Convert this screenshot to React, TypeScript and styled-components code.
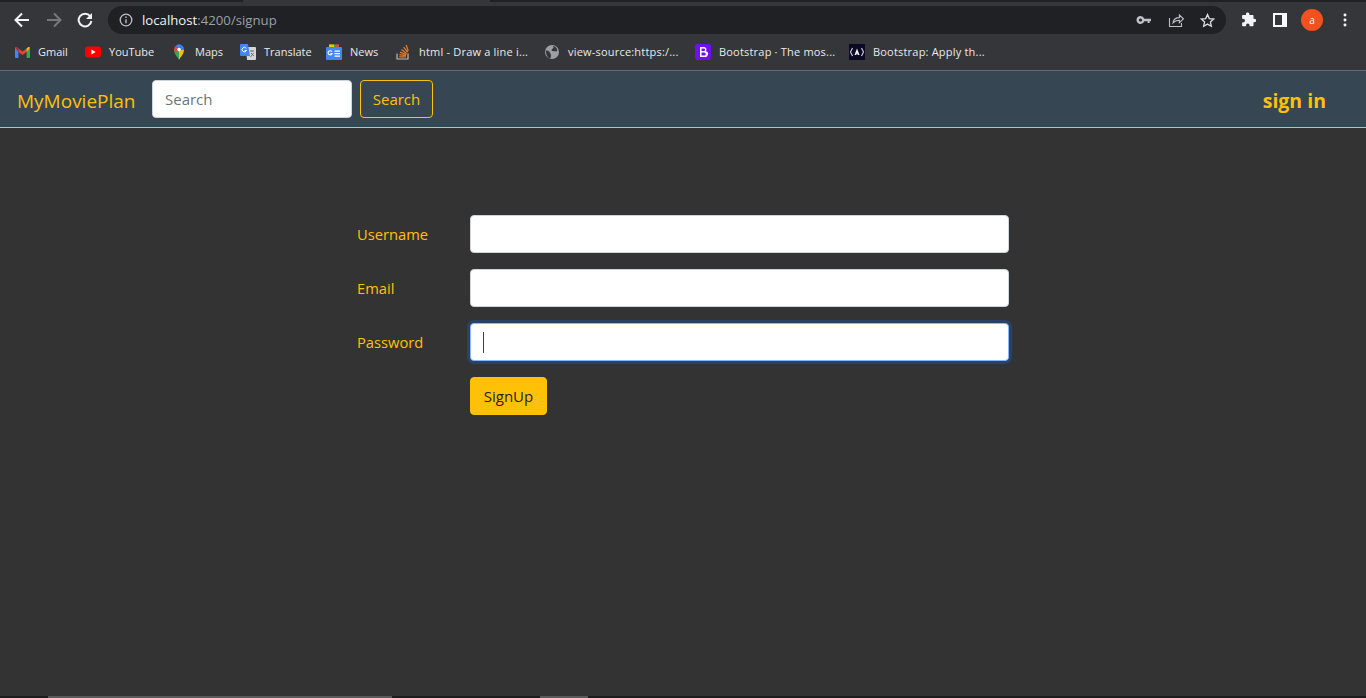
import React from 'react';
import styled, { createGlobalStyle } from 'styled-components';

const YELLOW = '#ffc107';

const GlobalStyle = createGlobalStyle`
  html, body {
    margin: 0;
    padding: 0;
    height: 100%;
    overflow: hidden;
    background: #333333;
    font-family: "Open Sans", "Liberation Sans", sans-serif;
  }
  * { box-sizing: border-box; }
`;

const Page = styled.div`
  display: flex;
  flex-direction: column;
  height: 698px;
  background: #333333;
`;

const TabStrip = styled.div`
  height: 2px;
  background: #202124;
  padding-left: 243px;
`;

const ActiveTab = styled.div`
  width: 247px;
  height: 2px;
  background: #35363a;
`;

const Toolbar = styled.div`
  display: flex;
  align-items: center;
  height: 32px;
  background: #35363a;
  padding: 4px 0 0 13px;
`;

const NavIcons = styled.div`
  display: flex;
  align-items: center;
  gap: 14px;
  width: 95px;
`;

const AddressBar = styled.div`
  display: flex;
  align-items: center;
  width: 1118px;
  height: 28px;
  border-radius: 14px;
  background: #202124;
  padding: 0 11px 0 11px;
`;

const Url = styled.div`
  flex: 1;
  margin-left: 9px;
  font-size: 13.2px;
  color: #9aa0a6;
  white-space: nowrap;
`;

const UrlHost = styled.span`
  color: #f1f3f4;
`;

const AddressActions = styled.div`
  display: flex;
  align-items: center;
  gap: 16px;
`;

const ToolbarActions = styled.div`
  display: flex;
  align-items: center;
  margin-left: 14px;
  gap: 17px;
`;

const Avatar = styled.div`
  display: flex;
  align-items: center;
  justify-content: center;
  width: 22px;
  height: 22px;
  margin: 0 3px 0 -3px;
  border-radius: 50%;
  background: #f4511e;
  color: #ffffff;
  font-size: 10px;
`;

const Bookmarks = styled.div`
  display: flex;
  align-items: center;
  gap: 16px;
  height: 37px;
  background: #35363a;
  padding: 0 0 1px 14px;
  border-bottom: 1px solid #6a6d70;
`;

const Bookmark = styled.div`
  display: flex;
  align-items: center;
  gap: 8px;
`;

const BookmarkIcon = styled.span`
  display: flex;
  align-items: center;
  justify-content: center;
  width: 16px;
  height: 16px;
`;

const BookmarkLabel = styled.span<{ $width: number; $long?: boolean }>`
  width: ${p => p.$width}px;
  font-size: 11px;
  letter-spacing: ${p => (p.$long ? '0.2px' : '0')};
  line-height: 16px;
  color: #e8eaed;
  white-space: nowrap;
`;

const Navbar = styled.nav`
  display: flex;
  align-items: center;
  height: 57px;
  background: #374653;
  padding: 0 40px 0 17px;
  border-bottom: 1px solid ${YELLOW};
`;

const Brand = styled.a`
  width: 135px;
  padding-top: 3px;
  font-size: 19px;
  color: ${YELLOW};
  white-space: nowrap;
`;

const SearchInput = styled.input`
  width: 200px;
  height: 38px;
  margin-right: 8px;
  padding: 6px 12px;
  border: 1px solid #ced4da;
  border-radius: 4px;
  background: #ffffff;
  font-family: inherit;
  font-size: 15px;
  &::placeholder { color: #6c757d; opacity: 1; }
`;

const OutlineButton = styled.button`
  width: 73px;
  height: 38px;
  padding: 0;
  border: 1px solid ${YELLOW};
  border-radius: 4px;
  background: transparent;
  color: ${YELLOW};
  font-family: inherit;
  font-size: 15px;
`;

const SignIn = styled.a`
  margin-left: auto;
  padding-top: 3px;
  font-size: 19.5px;
  font-weight: 700;
  color: ${YELLOW};
`;

const Main = styled.main`
  flex: 1;
  padding: 87px 0 0 357px;
`;

const Form = styled.form`
  display: flex;
  flex-direction: column;
  gap: 16px;
  width: 652px;
`;

const Row = styled.div`
  display: flex;
  align-items: center;
`;

const Label = styled.label`
  width: 113px;
  font-size: 14.7px;
  color: ${YELLOW};
`;

const Field = styled.div<{ $focused?: boolean }>`
  display: flex;
  align-items: center;
  width: 539px;
  height: 38px;
  padding: 0 12px;
  border: 1px solid ${p => (p.$focused ? '#86b7fe' : '#ced4da')};
  border-radius: 4px;
  background: #ffffff;
  box-shadow: ${p => (p.$focused ? '0 0 0 3px rgba(13, 110, 253, 0.25)' : 'none')};
`;

const Caret = styled.span`
  width: 1px;
  height: 21px;
  background: #3a3f44;
`;

const SubmitButton = styled.button`
  width: 77px;
  height: 38px;
  margin-left: 113px;
  padding: 0;
  border: 1px solid ${YELLOW};
  border-radius: 4px;
  background: ${YELLOW};
  color: #212529;
  font-family: inherit;
  font-size: 15px;
`;

const BottomBar = styled.div`
  display: flex;
  height: 2px;
  background: #1d1d1d;
  padding-left: 48px;
  gap: 148px;
`;

const BottomThumb = styled.div<{ $width: number }>`
  width: ${p => p.$width}px;
  background: #5a5a5a;
`;

const Stroke = { fill: 'none', strokeWidth: 2 };

const BackIcon = ({ color }: { color: string }) => (
  <svg width="18" height="18" viewBox="0 0 18 18" stroke={color} {...Stroke}>
    <path d="M16 9H3M9 2.5 2.5 9 9 15.5" />
  </svg>
);

const ForwardIcon = ({ color }: { color: string }) => (
  <svg width="18" height="18" viewBox="0 0 18 18" stroke={color} {...Stroke}>
    <path d="M2 9h13M9 2.5 15.5 9 9 15.5" />
  </svg>
);

const ReloadIcon = () => (
  <svg width="16" height="16" viewBox="0 0 16 16">
    <path d="M13.2 4.2A6.4 6.4 0 1 0 14.4 9" fill="none" stroke="#f1f3f4" strokeWidth="2" />
    <path d="M15 1v6H9z" fill="#f1f3f4" />
  </svg>
);

const InfoIcon = () => (
  <svg width="14" height="14" viewBox="0 0 14 14">
    <circle cx="7" cy="7" r="5.8" fill="none" stroke="#bdc1c6" strokeWidth="1.3" />
    <path d="M6.3 6.2h1.4v4H6.3zM6.3 3.6h1.4V5H6.3z" fill="#bdc1c6" />
  </svg>
);

const KeyIcon = () => (
  <svg width="16" height="16" viewBox="0 0 16 16">
    <path
      d="M4.5 4a4 4 0 0 1 3.8 2.7H15v2.6h-1.4V11h-2V9.3H8.3A4 4 0 1 1 4.5 4zm0 2.4a1.6 1.6 0 1 0 0 3.2 1.6 1.6 0 0 0 0-3.2z"
      fill="#bdc1c6"
      fillRule="evenodd"
    />
  </svg>
);

const ShareIcon = () => (
  <svg width="16" height="16" viewBox="0 0 16 16" fill="none" stroke="#bdc1c6" strokeWidth="1.1">
    <path d="M1.5 6v8.5h12V11" />
    <path d="M5 11c.4-3.6 3-5.4 6.4-5.4V3l4 3.8-4 3.8V8.2C8.8 8.2 6.6 9 5 11z" />
  </svg>
);

const StarIcon = () => (
  <svg width="15" height="15" viewBox="0 0 16 16" fill="none" stroke="#dadce0" strokeWidth="1.4">
    <path d="M8 1.6l1.9 4.3 4.7.5-3.5 3.1 1 4.6L8 11.8l-4.1 2.3 1-4.6L1.4 6.4l4.7-.5z" />
  </svg>
);

const PuzzleIcon = () => (
  <svg width="16" height="16" viewBox="0 0 16 16">
    <path
      d="M6 1.5a1.8 1.8 0 0 1 3.4.7V3h3.4c.4 0 .7.3.7.7v3h.8a1.8 1.8 0 0 1 0 3.6h-.8v3.2c0 .4-.3.7-.7.7H9.6v-.9a1.8 1.8 0 0 0-3.6 0v.9H2.8a.7.7 0 0 1-.7-.7v-3h1a1.9 1.9 0 0 0 0-3.8h-1V3.7c0-.4.3-.7.7-.7H6z"
      fill="#f1f3f4"
    />
  </svg>
);

const SidePanelIcon = () => (
  <svg width="14" height="14" viewBox="0 0 14 14">
    <path d="M0 0h14v14H0z" fill="#f8f9fa" />
    <path d="M2 2h7v10H2z" fill="#35363a" />
  </svg>
);

const MoreIcon = () => (
  <svg width="4" height="14" viewBox="0 0 4 14" fill="#f1f3f4">
    <rect x="0.5" y="0.5" width="3" height="3" rx="1.4" />
    <rect x="0.5" y="5.5" width="3" height="3" rx="1.4" />
    <rect x="0.5" y="10.5" width="3" height="3" rx="1.4" />
  </svg>
);

const GmailIcon = () => (
  <svg width="15" height="16" viewBox="0 0 15 16">
    <path d="M0 3.5 1.5 3 3.4 4.4V14H1a1 1 0 0 1-1-1z" fill="#4285f4" />
    <path d="M15 3.5 13.5 3l-1.9 1.4V14H14a1 1 0 0 0 1-1z" fill="#34a853" />
    <path d="M3.4 4.4 7.5 7.6l4.1-3.2V8L7.5 11 3.4 8z" fill="#ea4335" />
    <path d="M0 3.5 3.4 8V4.4L1.5 3z" fill="#c5221f" />
    <path d="M15 3.5 11.6 8V4.4L13.5 3z" fill="#fbbc04" />
  </svg>
);

const YouTubeIcon = () => (
  <svg width="16" height="16" viewBox="0 0 16 16">
    <rect x="0" y="2.5" width="16" height="11" rx="3" fill="#ff0000" />
    <path d="M6.4 5.5v5L10.6 8z" fill="#ffffff" />
  </svg>
);

const MapsIcon = () => (
  <svg width="14" height="16" viewBox="0 0 14 16">
    <path d="M7 16C5.8 13 2 10.4 2 5.5L7 6z" fill="#34a853" />
    <path d="M7 16c1.2-3 5-5.6 5-10.5L7 6z" fill="#fbbc04" />
    <path d="M2 5.5A5 5 0 0 1 3.6 2L7 5.500 3.500 9z" fill="#ea4335" />
    <path d="M3.6 2A5 5 0 0 1 9.6 1L7 5z" fill="#4285f4" />
    <path d="M9.6 1A5 5 0 0 1 12 5.5L7 6z" fill="#4285f4" />
    <circle cx="7" cy="5.5" r="1.8" fill="#ffffff" />
  </svg>
);

const TranslateIcon = () => (
  <svg width="16" height="16" viewBox="0 0 16 16">
    <path d="M6 3h9a1 1 0 0 1 1 1v11a1 1 0 0 1-1 1H7z" fill="#d6d6d6" />
    <path d="M10 7h4M12 6.500v1M10.500 13l3-4M11 9l3 3" stroke="#6a6a6a" strokeWidth="0.9" fill="none" />
    <path d="M1 0h7l2 12H1a1 1 0 0 1-1-1V1a1 1 0 0 1 1-1z" fill="#4285f4" />
    <path d="M6.300 4.400A2.300 2.300 0 1 0 6.500 6.500H4.600" stroke="#ffffff" strokeWidth="1" fill="none" />
  </svg>
);

const NewsIcon = () => (
  <svg width="16" height="16" viewBox="0 0 16 16">
    <path d="M3 0.500h10v4H3z" fill="#34a853" />
    <path d="M3 0.500h5v4H3z" fill="#fbbc04" />
    <path d="M9 0.500h4v3H9z" fill="#ea4335" />
    <rect x="0" y="3" width="16" height="13" rx="1" fill="#4285f4" />
    <path d="M5.900 7.600a2.100 2.100 0 1 0 .2 2H4.500" stroke="#ffffff" strokeWidth="1.1" fill="none" />
    <path d="M8.500 6.500h5.500v1.300H8.500zM8.500 9h5.500v1.300H8.500zM8.500 11.500h5.500v1.300H8.500z" fill="#ffffff" />
  </svg>
);

const StackIcon = () => (
  <svg width="14" height="16" viewBox="0 0 14 16" fill="none">
    <path d="M1 9.500V15h11V9.500" stroke="#bcbbbb" strokeWidth="1.2" />
    <path
      d="M3.200 12.800h6.600M3.400 10.600l6.500 1M4 8.200l6.200 2.500M5.400 5.600l5.400 4M7.600 3.200l4 5M10.200 1l2 6"
      stroke="#e87922"
      strokeWidth="1.300"
    />
  </svg>
);

const GlobeIcon = () => (
  <svg width="14" height="14" viewBox="0 0 14 14">
    <circle cx="7" cy="7" r="7" fill="#9aa0a6" />
    <path
      d="M1 5.500c2 0 3 .5 3.500 1.500S6 9 6 10.500 5.500 13 5 13.500C3 13 .8 10.500 1 5.500zM8 1c1 1 .5 2-.5 2.800S6 5.500 7.500 6s3 0 4.500.5c.8-2-.5-5-4-5.500z"
      fill="#35363a"
    />
  </svg>
);

const BootstrapIcon = () => (
  <svg width="16" height="16" viewBox="0 0 16 16">
    <rect width="16" height="16" rx="2.500" fill="#7010f0" />
    <path
      d="M5 3h4a2.500 2.500 0 0 1 1.800 4.200A2.800 2.800 0 0 1 9.300 13H5zm1.500 1.400v2.700H8.800a1.350 1.350 0 0 0 0-2.700zm0 4v3.200h2.700a1.600 1.600 0 0 0 0-3.200z"
      fill="#ffffff"
      fillRule="evenodd"
    />
  </svg>
);

const FireshipIcon = () => (
  <svg width="16" height="16" viewBox="0 0 16 16" fill="none">
    <rect width="16" height="16" fill="#0a0a23" />
    <path d="M3.500 4 1.500 8l2 4M12.500 4l2 4-2 4" stroke="#d0d4e8" strokeWidth="1.100" />
    <path d="M8 4.500 10.500 11H8.800L8 9.200 7.200 11H5.500z" fill="#f4f4ff" />
  </svg>
);

const bookmarks = [
  { label: 'Gmail', width: 31, icon: <GmailIcon /> },
  { label: 'YouTube', width: 46, icon: <YouTubeIcon /> },
  { label: 'Maps', width: 29, icon: <MapsIcon /> },
  { label: 'Translate', width: 46, icon: <TranslateIcon /> },
  { label: 'News', width: 29, icon: <NewsIcon /> },
  { label: 'html - Draw a line i...', width: 109, long: true, icon: <StackIcon /> },
  { label: 'view-source:https:/...', width: 111, long: true, icon: <GlobeIcon /> },
  { label: 'Bootstrap · The mos...', width: 114, long: true, icon: <BootstrapIcon /> },
  { label: 'Bootstrap: Apply th...', width: 111, long: true, icon: <FireshipIcon /> },
];

export default function App() {
  return (
    <Page>
      <GlobalStyle />
      <TabStrip>
        <ActiveTab />
      </TabStrip>
      <Toolbar>
        <NavIcons>
          <BackIcon color="#f1f3f4" />
          <ForwardIcon color="#75777b" />
          <ReloadIcon />
        </NavIcons>
        <AddressBar>
          <InfoIcon />
          <Url>
            <UrlHost>localhost</UrlHost>:4200/signup
          </Url>
          <AddressActions>
            <KeyIcon />
            <ShareIcon />
            <StarIcon />
          </AddressActions>
        </AddressBar>
        <ToolbarActions>
          <PuzzleIcon />
          <SidePanelIcon />
          <Avatar>a</Avatar>
          <MoreIcon />
        </ToolbarActions>
      </Toolbar>
      <Bookmarks>
        {bookmarks.map(b => (
          <Bookmark key={b.label}>
            <BookmarkIcon>{b.icon}</BookmarkIcon>
            <BookmarkLabel $width={b.width} $long={b.long}>
              {b.label}
            </BookmarkLabel>
          </Bookmark>
        ))}
      </Bookmarks>
      <Navbar>
        <Brand>MyMoviePlan</Brand>
        <SearchInput placeholder="Search" />
        <OutlineButton type="button">Search</OutlineButton>
        <SignIn>sign in</SignIn>
      </Navbar>
      <Main>
        <Form>
          <Row>
            <Label>Username</Label>
            <Field />
          </Row>
          <Row>
            <Label>Email</Label>
            <Field />
          </Row>
          <Row>
            <Label>Password</Label>
            <Field $focused>
              <Caret />
            </Field>
          </Row>
          <SubmitButton type="button">SignUp</SubmitButton>
        </Form>
      </Main>
      <BottomBar>
        <BottomThumb $width={344} />
        <BottomThumb $width={48} />
      </BottomBar>
    </Page>
  );
}
